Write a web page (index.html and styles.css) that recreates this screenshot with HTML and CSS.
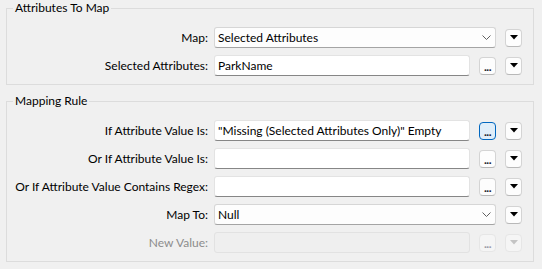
FILE: index.html
```html
<!DOCTYPE html>
<html lang="en">
<head>
    <meta charset="UTF-8">
    <title>Attribute Value Mapper</title>
    <link rel="stylesheet" href="styles.css">
</head>
<body>

    <fieldset class="group">
        <legend>Attributes To Map</legend>
        <div class="rows">
            <span class="lbl">Map:</span>
            <div class="field combo">
                <span>Selected Attributes</span>
                <svg class="chev" width="9" height="5" viewBox="0 0 9 5"><polyline points="0.5,0.5 4.5,4.5 8.5,0.5" fill="none" stroke="#606060" stroke-width="1"/></svg>
            </div>
            <button class="btn menu"><svg width="8" height="5" viewBox="0 0 8 5"><polygon points="0,0 8,0 4,4.5" fill="#000"/></svg></button>

            <span class="lbl">Selected Attributes:</span>
            <div class="field">ParkName</div>
            <button class="btn dots">...</button>
            <button class="btn menu"><svg width="8" height="5" viewBox="0 0 8 5"><polygon points="0,0 8,0 4,4.5" fill="#000"/></svg></button>
        </div>
    </fieldset>

    <fieldset class="group">
        <legend>Mapping Rule</legend>
        <div class="rows">
            <span class="lbl">If Attribute Value Is:</span>
            <div class="field">"Missing (Selected Attributes Only)" Empty</div>
            <button class="btn dots focus">...</button>
            <button class="btn menu"><svg width="8" height="5" viewBox="0 0 8 5"><polygon points="0,0 8,0 4,4.5" fill="#000"/></svg></button>

            <span class="lbl">Or If Attribute Value Is:</span>
            <div class="field"></div>
            <button class="btn dots">...</button>
            <button class="btn menu"><svg width="8" height="5" viewBox="0 0 8 5"><polygon points="0,0 8,0 4,4.5" fill="#000"/></svg></button>

            <span class="lbl">Or If Attribute Value Contains Regex:</span>
            <div class="field"></div>
            <button class="btn dots">...</button>
            <button class="btn menu"><svg width="8" height="5" viewBox="0 0 8 5"><polygon points="0,0 8,0 4,4.5" fill="#000"/></svg></button>

            <span class="lbl">Map To:</span>
            <div class="field combo">
                <span>Null</span>
                <svg class="chev" width="9" height="5" viewBox="0 0 9 5"><polyline points="0.5,0.5 4.5,4.5 8.5,0.5" fill="none" stroke="#606060" stroke-width="1"/></svg>
            </div>
            <button class="btn menu"><svg width="8" height="5" viewBox="0 0 8 5"><polygon points="0,0 8,0 4,4.5" fill="#000"/></svg></button>

            <span class="lbl off">New Value:</span>
            <div class="field off"></div>
            <button class="btn dots off">...</button>
            <button class="btn menu off"><svg width="8" height="5" viewBox="0 0 8 5"><polygon points="0,0 8,0 4,4.5" fill="#c4c4c4"/></svg></button>
        </div>
    </fieldset>

</body>
</html>
```

FILE: styles.css
```css
body {
    margin: 0;
    padding: 0 8px 0 6px;
    background-color: #f0f0f0;
    color: #000;
    font-family: Lato, "Liberation Sans", sans-serif;
    font-size: 12px;
    line-height: 16px;
}

.group {
    margin: 0;
    padding: 11px 11px 8px 6px;
    border: 1px solid #dcdcdc;
    min-width: 0;
}

.group + .group {
    margin-top: 8px;
}

.group legend {
    padding: 0 2px;
}

.rows {
    display: grid;
    grid-template-columns: 1fr 256px 17px 17px;
    column-gap: 9px;
    row-gap: 7px;
    align-items: center;
}

.lbl {
    text-align: right;
    margin-right: -3px;
    white-space: nowrap;
}

.lbl.off {
    color: #8c8c8c;
}

.field {
    box-sizing: border-box;
    height: 21px;
    padding: 0 3px;
    display: flex;
    align-items: center;
    background: #fff;
    border: 1px solid #e3e3e3;
    border-bottom-color: #868686;
    border-radius: 3px;
    white-space: nowrap;
    overflow: hidden;
}

.field.combo {
    grid-column: 2 / 4;
    justify-content: space-between;
    padding-right: 4px;
    background: #fdfdfd;
    border-color: #d6d6d6;
    border-bottom-color: #a4a4a4;
}

.field.off {
    background: #efefef;
    border-color: #e2e2e2;
}

.btn {
    box-sizing: border-box;
    width: 17px;
    height: 18px;
    padding: 0;
    margin: 0;
    display: flex;
    justify-content: center;
    background: #fdfdfd;
    border: 1px solid #d4d4d4;
    border-bottom-color: #b8b8b8;
    border-radius: 4px;
    font: inherit;
    color: #1a1a2e;
}

.btn.menu {
    grid-column: 4;
    align-items: flex-start;
    padding-top: 5px;
}

.btn.dots {
    align-items: flex-end;
    font-weight: bold;
    line-height: 12px;
    letter-spacing: -0.5px;
    padding-bottom: 1px;
}

.btn.focus {
    background: #e0eef9;
    border-color: #0067c0;
}

.btn.off {
    background: #f5f5f5;
    border-color: #e6e6e6;
    color: #9a9aa8;
}
```
